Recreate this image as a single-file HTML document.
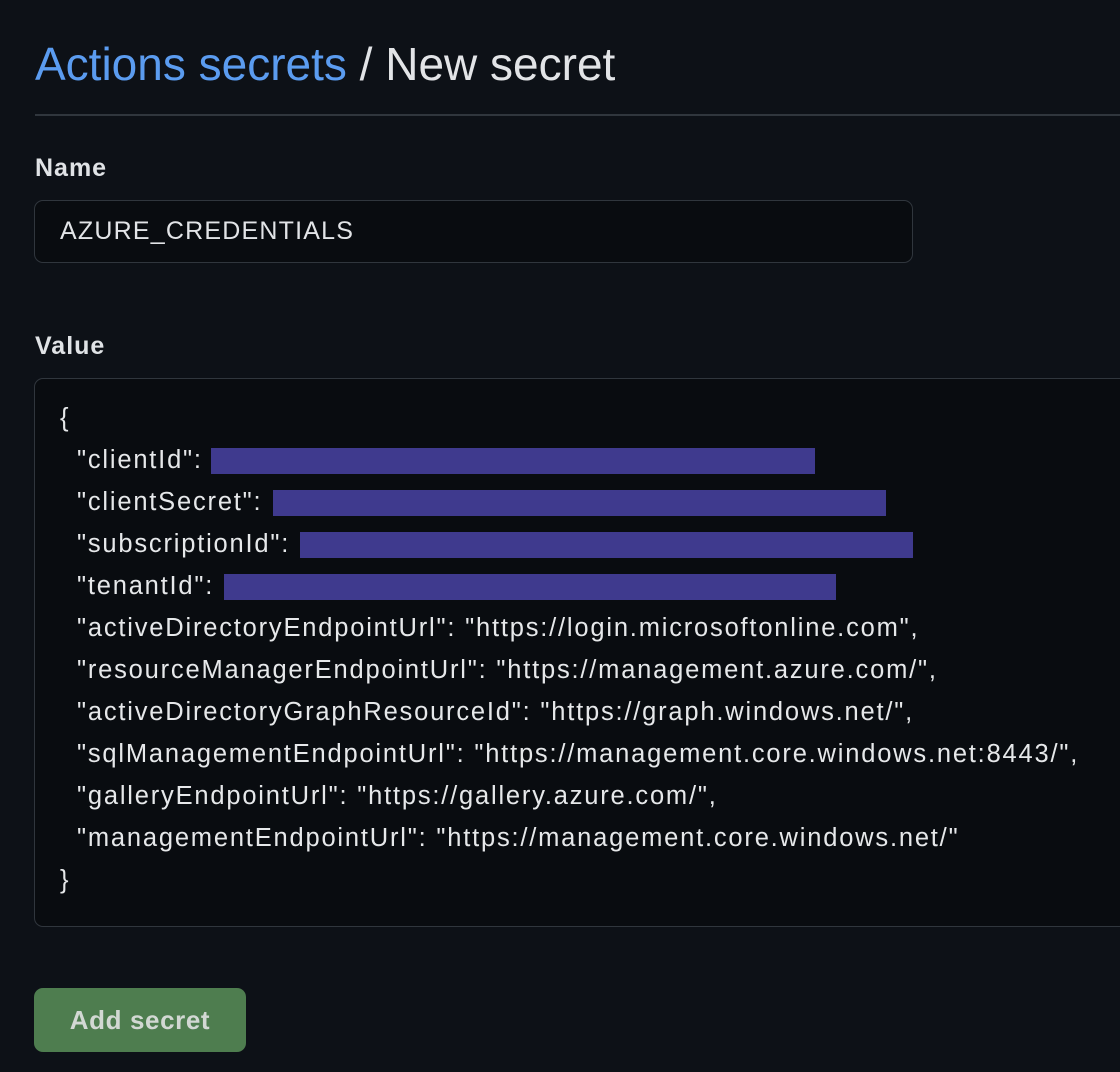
<!DOCTYPE html>
<html><head><style>
body{margin:0;width:1120px;height:1072px;background:#0d1117;font-family:"Liberation Sans",sans-serif;overflow:hidden;position:relative;color:#e6edf3}
.a{position:absolute;white-space:nowrap}
h1{position:absolute;left:35px;top:36px;margin:0;font-weight:normal;font-size:46px;line-height:56px;color:#e2e4e7;letter-spacing:0px}
h1 span{color:#5b9cf0}
.hr{position:absolute;left:35px;right:0;top:114px;height:2px;background:#30363d}
.lbl{font-weight:bold;font-size:25px;color:#e0e3e6;letter-spacing:1px}
.box{position:absolute;background:#090c10;border:1.5px solid #30363d;border-radius:9px}
.code{font-size:25.5px;color:#e6e8ea;line-height:42px;letter-spacing:1.8px}
.bar{position:absolute;background:#3f3a8e;height:26px}
.btn{position:absolute;left:34px;top:988px;width:212px;height:64px;background:#4e7d4f;border-radius:9px;color:#d2d8d3;font-weight:bold;font-size:26px;line-height:64px;text-align:center;letter-spacing:0.6px}
</style></head><body>
<h1><span>Actions secrets</span> / New secret</h1>
<div class="hr"></div>
<div class="a lbl" style="left:35px;top:154px">Name</div>
<div class="box" style="left:34px;top:200px;width:877px;height:61px"></div>
<div class="a" style="left:60px;top:217px;font-size:25px;color:#e2e4e7;letter-spacing:1.2px">AZURE_CREDENTIALS</div>
<div class="a lbl" style="left:35px;top:332px">Value</div>
<div class="box" style="left:34px;top:378px;width:1100px;height:547px"></div>
<div class="a code" style="left:60px;top:397px">{</div>
<div class="a code" style="left:77px;top:439px">
"clientId":<br>
"clientSecret":<br>
"subscriptionId":<br>
"tenantId":<br>
"activeDirectoryEndpointUrl": "https://login.microsoftonline.com",<br>
"resourceManagerEndpointUrl": "https://management.azure.com/",<br>
"activeDirectoryGraphResourceId": "https://graph.windows.net/",<br>
"sqlManagementEndpointUrl": "https://management.core.windows.net:8443/",<br>
"galleryEndpointUrl": "https://gallery.azure.com/",<br>
"managementEndpointUrl": "https://management.core.windows.net/"
</div>
<div class="a code" style="left:60px;top:859px">}</div>
<div class="bar" style="left:211px;top:448px;width:604px"></div>
<div class="bar" style="left:273px;top:490px;width:613px"></div>
<div class="bar" style="left:300px;top:532px;width:613px"></div>
<div class="bar" style="left:224px;top:574px;width:612px"></div>
<div class="btn">Add secret</div>
</body></html>
